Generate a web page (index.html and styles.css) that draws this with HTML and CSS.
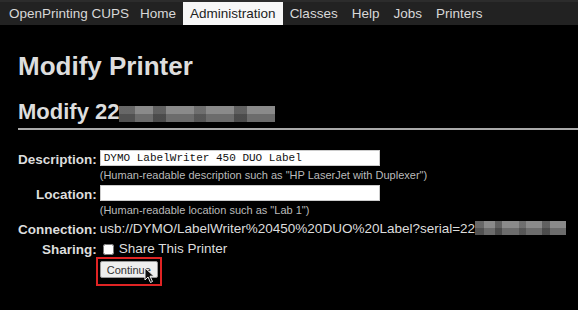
FILE: index.html
```html
<!DOCTYPE html>
<html lang="en">

<head>
    <meta charset="UTF-8">
    <title>Modify Printer - CUPS</title>
    <link rel="stylesheet" href="styles.css">
</head>

<body>
    <div class="header">
        <ul>
            <li><a class="brand" href="#">OpenPrinting CUPS</a></li>
            <li><a href="#">Home</a></li>
            <li><a class="active" href="#">Administration</a></li>
            <li><a href="#">Classes</a></li>
            <li><a href="#">Help</a></li>
            <li><a href="#">Jobs</a></li>
            <li><a href="#">Printers</a></li>
        </ul>
    </div>

    <div class="body">
        <h1 class="title">Modify Printer</h1>
        <h2 class="title">Modify 22<span class="mosaic wide"></span></h2>

        <form>
            <table class="edit">
                <tr>
                    <th>Description:</th>
                    <td><input type="text" value="DYMO LabelWriter 450 DUO Label">
                        <div class="help">(Human-readable description such as "HP LaserJet with Duplexer")</div></td>
                </tr>
                <tr>
                    <th>Location:</th>
                    <td><input type="text" value="">
                        <div class="help">(Human-readable location such as "Lab 1")</div></td>
                </tr>
                <tr>
                    <th>Connection:</th>
                    <td class="uri">usb://DYMO/LabelWriter%20450%20DUO%20Label?serial=22<span class="mosaic small"></span></td>
                </tr>
                <tr>
                    <th>Sharing:</th>
                    <td><label class="share"><input type="checkbox"> Share This Printer</label></td>
                </tr>
                <tr>
                    <th></th>
                    <td>
                        <span class="highlight">
                            <button type="button">Continue</button>
                            <svg class="pointer" width="12" height="17" viewBox="0 0 12 17">
                                <path d="M1 1 L1 13 L4 10 L6.5 15.5 L8.5 14.5 L6 9.2 L10 9.2 Z" fill="#111" stroke="#eee" stroke-width="1"/>
                            </svg>
                        </span>
                    </td>
                </tr>
            </table>
        </form>
    </div>
</body>

</html>
```

FILE: styles.css
```css
/* Global */
* {
    box-sizing: border-box;
}

body {
    margin: 0;
    background-color: #000;
    color: #ddd;
    font-family: 'Liberation Sans', Arial, sans-serif;
    height: 310px;
    overflow: hidden;
}

/* Top navigation */
.header {
    background-color: #222;
    border-top: 2px solid #2c2c2c;
    height: 25px;
}

.header ul {
    list-style: none;
    margin: 0;
    padding: 0 0 0 2px;
    display: flex;
}

.header a {
    display: block;
    padding: 0 7px;
    height: 23px;
    line-height: 23px;
    font-size: 13.5px;
    color: #d8d8d8;
    text-decoration: none;
}

.header a.brand {
    padding-right: 4px;
}

.header a.active {
    background-color: #f7f7f7;
    color: #222;
}

/* Page body */
.body {
    padding: 0 0 0 18px;
}

h1.title {
    margin: 26px 0 0;
    font-size: 26px;
    line-height: 30px;
    color: #ddd;
}

h2.title {
    margin: 18px 0 0;
    padding-bottom: 3px;
    font-size: 22px;
    line-height: 26px;
    color: #ddd;
    border-bottom: 2px solid #aaa;
    display: flex;
    align-items: center;
}

/* Blurred serial number */
.mosaic {
    display: inline-block;
    vertical-align: middle;
    background:
        linear-gradient(90deg, rgba(0,0,0,0.25) 0 10%, transparent 10% 22%, rgba(0,0,0,0.3) 22% 30%, transparent 30% 48%, rgba(0,0,0,0.2) 48% 56%, transparent 56% 74%, rgba(0,0,0,0.3) 74% 82%, transparent 82%),
        linear-gradient(180deg, #8a8a8a 0 50%, #6c6c6c 50%);
}

.mosaic.wide {
    width: 156px;
    height: 16px;
    margin-top: 4px;
}

.mosaic.small {
    width: 91px;
    height: 14px;
    margin-top: -2px;
}

/* Form table */
table.edit {
    margin-top: 20px;
    border-spacing: 0;
}

table.edit th {
    width: 78px;
    text-align: right;
    vertical-align: top;
    font-size: 13.5px;
    font-weight: bold;
    color: #ddd;
    padding: 2px 3px 0 0;
    white-space: nowrap;
}

table.edit td {
    padding: 0 0 3px 0;
    font-size: 13.5px;
    vertical-align: top;
}

table.edit input[type="text"] {
    width: 280px;
    height: 16px;
    margin: 0 0 2px;
    padding: 0 3px;
    border: 1px solid #ccc;
    background-color: #fff;
    font-family: 'Liberation Mono', 'Courier New', monospace;
    font-size: 11px;
    color: #111;
    display: block;
}

.help {
    font-size: 11px;
    line-height: 14px;
    color: #bbb;
}

td.uri {
    font-size: 13px;
    line-height: 17px;
    color: #ddd;
    white-space: nowrap;
}

.share {
    display: flex;
    align-items: center;
    color: #ddd;
    line-height: 18px;
}

.share input {
    width: 11px;
    height: 11px;
    margin: 0 5px 0 3px;
}

/* Continue button with red outline */
.highlight {
    position: relative;
    display: inline-block;
    margin: -4px 0 0 -4px;
    padding: 2px 2px 6px 2px;
    border: 2px solid #e02424;
}

.highlight button {
    display: block;
    width: 58px;
    height: 17px;
    padding: 0;
    font-family: 'Liberation Sans', Arial, sans-serif;
    font-size: 11px;
    color: #333;
    background-color: #eee;
    border: 1px solid #999;
    border-radius: 2px;
}

.pointer {
    position: absolute;
    left: 46px;
    top: 8px;
}
```
